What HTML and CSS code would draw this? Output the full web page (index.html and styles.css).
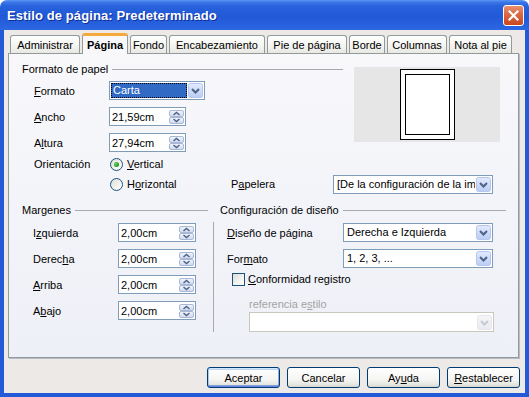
FILE: index.html
```html
<!DOCTYPE html>
<html lang="es">
<head>
<meta charset="utf-8">
<title>Estilo de página: Predeterminado</title>
<link rel="stylesheet" href="styles.css">
</head>
<body>
<svg class="defs" width="0" height="0" aria-hidden="true">
  <defs>
    <linearGradient id="gdd" x1="0" y1="0" x2="0" y2="1">
      <stop offset="0" stop-color="#e3ebfd"/>
      <stop offset="1" stop-color="#b9ccf5"/>
    </linearGradient>
    <linearGradient id="gsp" x1="0" y1="0" x2="0" y2="1">
      <stop offset="0" stop-color="#f2f5fc"/>
      <stop offset="1" stop-color="#cdd8ee"/>
    </linearGradient>
    <linearGradient id="gdis" x1="0" y1="0" x2="0" y2="1">
      <stop offset="0" stop-color="#f6f6f6"/>
      <stop offset="1" stop-color="#e8eaf0"/>
    </linearGradient>
  </defs>
</svg>
<div class="window">
  <div class="titlebar">
    <span class="title">Estilo de página: Predeterminado</span>
    <span class="close"><svg width="11" height="11" viewBox="0 0 11 11"><path d="M1.5 1.5 L9.5 9.5 M9.5 1.5 L1.5 9.5" stroke="#fff" stroke-width="2.2" stroke-linecap="square"/></svg></span>
  </div>
  <div class="frame">
    <div class="tabs">
      <div class="tab t-admin">Administrar</div>
      <div class="tab active t-pag">Página</div>
      <div class="tab t-fondo">Fondo</div>
      <div class="tab t-enc">Encabezamiento</div>
      <div class="tab t-pie">Pie de página</div>
      <div class="tab t-borde">Borde</div>
      <div class="tab t-col">Columnas</div>
      <div class="tab t-nota">Nota al pie</div>
    </div>
    <div class="panel">
      <div class="top">
        <div class="top-left">
          <div class="group-head"><span>Formato de papel</span></div>
          <div class="row first">
            <span class="lbl l75"><u>F</u>ormato</span>
            <div class="combo focus c96">
              <span class="val">Carta</span>
              <svg class="dd" width="15" height="15" viewBox="0 0 15 15"><rect x="0.5" y="0.5" width="14" height="14" rx="2" fill="url(#gdd)" stroke="#b4c6ee"/><path d="M4 6 L7.5 9.5 L11 6" fill="none" stroke="#4d6185" stroke-width="2"/></svg>
            </div>
          </div>
          <div class="row">
            <span class="lbl l75"><u>A</u>ncho</span>
            <div class="spin-field s77">
              <span class="val">21,59cm</span>
              <svg class="spin" width="15" height="14" viewBox="0 0 15 14"><rect x="0.5" y="0.5" width="14" height="6" rx="1.5" fill="url(#gsp)" stroke="#a9b8d5"/><rect x="0.5" y="7.5" width="14" height="6" rx="1.5" fill="url(#gsp)" stroke="#a9b8d5"/><path d="M4.5 5 L7.5 2.5 L10.5 5" fill="none" stroke="#4d6185" stroke-width="1.4"/><path d="M4.5 9 L7.5 11.5 L10.5 9" fill="none" stroke="#4d6185" stroke-width="1.4"/></svg>
            </div>
          </div>
          <div class="row">
            <span class="lbl l75">A<u>l</u>tura</span>
            <div class="spin-field s77">
              <span class="val">27,94cm</span>
              <svg class="spin" width="15" height="14" viewBox="0 0 15 14"><rect x="0.5" y="0.5" width="14" height="6" rx="1.5" fill="url(#gsp)" stroke="#a9b8d5"/><rect x="0.5" y="7.5" width="14" height="6" rx="1.5" fill="url(#gsp)" stroke="#a9b8d5"/><path d="M4.5 5 L7.5 2.5 L10.5 5" fill="none" stroke="#4d6185" stroke-width="1.4"/><path d="M4.5 9 L7.5 11.5 L10.5 9" fill="none" stroke="#4d6185" stroke-width="1.4"/></svg>
            </div>
          </div>
        </div>
        <div class="preview">
          <div class="page"><div class="page-inner"></div></div>
        </div>
      </div>

      <div class="orient first">
        <span class="lbl l75">Orientación</span>
        <span class="radio on"></span>
        <span class="opt-text"><u>V</u>ertical</span>
      </div>
      <div class="orient">
        <span class="lbl l75"></span>
        <div class="opt">
          <span class="radio"></span>
          <span class="opt-text">H<u>o</u>rizontal</span>
        </div>
        <span class="lbl l102">P<u>a</u>pelera</span>
        <div class="combo c160">
          <span class="val clip">[De la configuración de la impresora]</span>
          <svg class="dd" width="15" height="15" viewBox="0 0 15 15"><rect x="0.5" y="0.5" width="14" height="14" rx="2" fill="url(#gdd)" stroke="#b4c6ee"/><path d="M4 6 L7.5 9.5 L11 6" fill="none" stroke="#4d6185" stroke-width="2"/></svg>
        </div>
      </div>

      <div class="bottom">
        <div class="col-left">
          <div class="group-head"><span>Margenes</span></div>
          <div class="mrow first">
            <span class="lbl l85">I<u>z</u>quierda</span>
            <div class="spin-field s78">
              <span class="val">2,00cm</span>
              <svg class="spin" width="15" height="14" viewBox="0 0 15 14"><rect x="0.5" y="0.5" width="14" height="6" rx="1.5" fill="url(#gsp)" stroke="#a9b8d5"/><rect x="0.5" y="7.5" width="14" height="6" rx="1.5" fill="url(#gsp)" stroke="#a9b8d5"/><path d="M4.5 5 L7.5 2.5 L10.5 5" fill="none" stroke="#4d6185" stroke-width="1.4"/><path d="M4.5 9 L7.5 11.5 L10.5 9" fill="none" stroke="#4d6185" stroke-width="1.4"/></svg>
            </div>
          </div>
          <div class="mrow">
            <span class="lbl l85">Derec<u>h</u>a</span>
            <div class="spin-field s78">
              <span class="val">2,00cm</span>
              <svg class="spin" width="15" height="14" viewBox="0 0 15 14"><rect x="0.5" y="0.5" width="14" height="6" rx="1.5" fill="url(#gsp)" stroke="#a9b8d5"/><rect x="0.5" y="7.5" width="14" height="6" rx="1.5" fill="url(#gsp)" stroke="#a9b8d5"/><path d="M4.5 5 L7.5 2.5 L10.5 5" fill="none" stroke="#4d6185" stroke-width="1.4"/><path d="M4.5 9 L7.5 11.5 L10.5 9" fill="none" stroke="#4d6185" stroke-width="1.4"/></svg>
            </div>
          </div>
          <div class="mrow">
            <span class="lbl l85"><u>A</u>rriba</span>
            <div class="spin-field s78">
              <span class="val">2,00cm</span>
              <svg class="spin" width="15" height="14" viewBox="0 0 15 14"><rect x="0.5" y="0.5" width="14" height="6" rx="1.5" fill="url(#gsp)" stroke="#a9b8d5"/><rect x="0.5" y="7.5" width="14" height="6" rx="1.5" fill="url(#gsp)" stroke="#a9b8d5"/><path d="M4.5 5 L7.5 2.5 L10.5 5" fill="none" stroke="#4d6185" stroke-width="1.4"/><path d="M4.5 9 L7.5 11.5 L10.5 9" fill="none" stroke="#4d6185" stroke-width="1.4"/></svg>
            </div>
          </div>
          <div class="mrow">
            <span class="lbl l85">A<u>b</u>ajo</span>
            <div class="spin-field s78">
              <span class="val">2,00cm</span>
              <svg class="spin" width="15" height="14" viewBox="0 0 15 14"><rect x="0.5" y="0.5" width="14" height="6" rx="1.5" fill="url(#gsp)" stroke="#a9b8d5"/><rect x="0.5" y="7.5" width="14" height="6" rx="1.5" fill="url(#gsp)" stroke="#a9b8d5"/><path d="M4.5 5 L7.5 2.5 L10.5 5" fill="none" stroke="#4d6185" stroke-width="1.4"/><path d="M4.5 9 L7.5 11.5 L10.5 9" fill="none" stroke="#4d6185" stroke-width="1.4"/></svg>
            </div>
          </div>
        </div>
        <div class="vsep"></div>
        <div class="col-right">
          <div class="group-head"><span>Configuración de diseño</span></div>
          <div class="crow first">
            <span class="lbl l116"><u>D</u>iseño de página</span>
            <div class="combo c150">
              <span class="val">Derecha e Izquierda</span>
              <svg class="dd" width="15" height="15" viewBox="0 0 15 15"><rect x="0.5" y="0.5" width="14" height="14" rx="2" fill="url(#gdd)" stroke="#b4c6ee"/><path d="M4 6 L7.5 9.5 L11 6" fill="none" stroke="#4d6185" stroke-width="2"/></svg>
            </div>
          </div>
          <div class="crow">
            <span class="lbl l116">For<u>m</u>ato</span>
            <div class="combo c150">
              <span class="val">1, 2, 3, ...</span>
              <svg class="dd" width="15" height="15" viewBox="0 0 15 15"><rect x="0.5" y="0.5" width="14" height="14" rx="2" fill="url(#gdd)" stroke="#b4c6ee"/><path d="M4 6 L7.5 9.5 L11 6" fill="none" stroke="#4d6185" stroke-width="2"/></svg>
            </div>
          </div>
          <div class="check-row">
            <span class="check"></span>
            <span class="opt-text"><u>C</u>onformidad registro</span>
          </div>
          <div class="ref-label">referencia e<u>s</u>tilo</div>
          <div class="combo disabled c245">
            <span class="val"></span>
            <svg class="dd" width="15" height="15" viewBox="0 0 15 15"><rect x="0.5" y="0.5" width="14" height="14" rx="2" fill="url(#gdis)" stroke="#e4e6ec"/><path d="M4 6 L7.5 9.5 L11 6" fill="none" stroke="#c6cad4" stroke-width="2"/></svg>
          </div>
        </div>
      </div>
    </div>
    <div class="buttons">
      <button class="btn default">Aceptar</button>
      <button class="btn">Cancelar</button>
      <button class="btn">Ay<u>u</u>da</button>
      <button class="btn"><u>R</u>establecer</button>
    </div>
  </div>
</div>
</body>
</html>
```

FILE: styles.css
```css
* { box-sizing: border-box; margin: 0; padding: 0; }
html, body { width: 529px; height: 397px; overflow: hidden; }
body {
  font-family: "Liberation Sans", Arial, sans-serif;
  font-size: 11px;
  color: #000;
  background: #ffffff;
}
.defs { position: absolute; width: 0; height: 0; }

.window {
  width: 529px;
  height: 397px;
  display: flex;
  flex-direction: column;
}

/* ---------- title bar ---------- */
.titlebar {
  height: 30px;
  flex: none;
  display: flex;
  align-items: center;
  justify-content: space-between;
  padding: 0 5px 0 7px;
  border-radius: 7px 7px 0 0;
  background: linear-gradient(to bottom,
    #5a95f4 0%, #3a76e8 8%, #2862dc 20%, #2159d6 55%, #2862df 85%, #2d68e4 100%);
}
.title {
  font-weight: bold;
  font-size: 13px;
  color: #fff;
  text-shadow: 1px 1px 0 #0f2f9a;
  letter-spacing: 0.1px;
}
.close {
  width: 21px;
  height: 21px;
  margin-top: 1px;
  border: 1px solid #fff;
  border-radius: 3px;
  background: linear-gradient(to bottom, #e98f6f 0%, #dc6642 45%, #c9471f 100%);
  display: flex;
  align-items: center;
  justify-content: center;
}

/* ---------- frame ---------- */
.frame {
  flex: 1;
  display: flex;
  flex-direction: column;
  background: #ece9e6;
  border: 4px solid #2459d8;
  border-top: 0;
}

/* ---------- tabs ---------- */
.tabs {
  height: 23px;
  flex: none;
  display: flex;
  align-items: flex-end;
  gap: 2px;
  padding-left: 6px;
  position: relative;
  z-index: 2;
}
.tab {
  height: 18px;
  flex: none;
  display: flex;
  align-items: center;
  justify-content: center;
  border: 1px solid #919b9c;
  border-bottom: 0;
  border-radius: 3px 3px 0 0;
  background: linear-gradient(to bottom, #ffffff 0%, #f6f6f3 50%, #e9e8e3 100%);
  white-space: nowrap;
}
.tab.active {
  height: 21px;
  margin-bottom: -1px;
  font-weight: bold;
  border-top: 3px solid #f4a93a;
  background: #f8f8fb;
}
.t-admin { width: 70px; }
.t-pag { width: 46px; }
.t-fondo { width: 37px; }
.t-enc { width: 96px; }
.t-pie { width: 80px; }
.t-borde { width: 36px; }
.t-col { width: 60px; }
.t-nota { width: 63px; }

/* ---------- panel ---------- */
.panel {
  flex: none;
  margin-left: 4px;
  width: 511px;
  height: 305px;
  border: 1px solid #919b9c;
  background: linear-gradient(to bottom, #f8f8fb 0%, #eef0f7 100%);
  box-shadow: 1px 1px 0 #b9bcc6;
}

.top { display: flex; padding-left: 13px; }
.top-left { width: 321px; }

.group-head {
  display: flex;
  align-items: center;
  height: 14px;
  white-space: nowrap;
}
.top-left .group-head { margin-top: 8px; }
.group-head::after {
  content: "";
  flex: 1;
  border-top: 1px solid #a9a9ad;
  margin-left: 4px;
}

.lbl { white-space: nowrap; flex: none; }
.l75 { width: 75px; }
.l85 { width: 85px; }
.l102 { width: 102px; }
.l116 { width: 116px; }

.row {
  display: flex;
  align-items: center;
  height: 19px;
  padding-left: 12px;
  margin-top: 7px;
}
.row.first { margin-top: 5px; }

/* combo box */
.combo {
  display: flex;
  align-items: center;
  height: 19px;
  padding: 1px;
  border: 1px solid #7f9db9;
  background: #fff;
  flex: none;
}
.combo .val {
  flex: 1;
  height: 15px;
  line-height: 15px;
  padding-left: 2px;
  white-space: nowrap;
  overflow: hidden;
}
.combo .dd { flex: none; margin-left: 1px; }
.combo.focus .val {
  background: #316ac5;
  color: #fff;
  outline: 1px dotted #000;
  outline-offset: -1px;
}
.combo.disabled { border-color: #c9c7ba; height: 20px; }
.c96 { width: 96px; }
.c150 { width: 150px; }
.c160 { width: 160px; }
.c245 { width: 245px; margin-left: 29px; margin-top: 1px; }

/* spin field */
.spin-field {
  display: flex;
  align-items: center;
  height: 19px;
  padding-right: 1px;
  border: 1px solid #7f9db9;
  background: #fff;
  flex: none;
}
.spin-field .val { flex: 1; padding-left: 2px; white-space: nowrap; }
.spin-field .spin { flex: none; }
.s77 { width: 77px; }
.s78 { width: 78px; }

/* preview */
.preview {
  margin-left: 11px;
  margin-top: 13px;
  width: 146px;
  height: 75px;
  background: #e6e6e6;
  display: flex;
  justify-content: center;
  align-items: center;
}
.page {
  width: 55px;
  height: 71px;
  border: 1px solid #000;
  background: #fff;
  padding: 4px;
}
.page-inner {
  width: 100%;
  height: 100%;
  border: 1px solid #000;
}

/* orientation */
.orient {
  display: flex;
  align-items: center;
  height: 20px;
  padding-left: 25px;
}
.orient.first { margin-top: 2px; }
.opt { width: 122px; display: flex; align-items: center; flex: none; }
.opt-text { margin-left: 4px; white-space: nowrap; }

.radio {
  width: 13px;
  height: 13px;
  margin-left: 1px;
  flex: none;
  border-radius: 50%;
  border: 1px solid #1c5180;
  background: linear-gradient(135deg, #dcdcd5 0%, #f4f4f0 60%, #ffffff 100%);
  display: flex;
  align-items: center;
  justify-content: center;
}
.radio.on::after {
  content: "";
  width: 5px;
  height: 5px;
  border-radius: 50%;
  background: radial-gradient(circle at 35% 35%, #6ed66e 0%, #21a121 60%, #1a8a1a 100%);
}

/* bottom section */
.bottom {
  display: flex;
  padding-left: 13px;
  margin-top: 9px;
}
.col-left { width: 186px; }
.vsep {
  width: 1px;
  height: 110px;
  margin-left: 5px;
  margin-top: 19px;
  background: #a9a9ad;
  flex: none;
}
.col-right { width: 286px; margin-left: 6px; }

.mrow, .crow {
  display: flex;
  align-items: center;
  height: 19px;
  margin-top: 7px;
}
.mrow { padding-left: 11px; }
.crow { padding-left: 7px; }
.mrow.first, .crow.first { margin-top: 6px; }

.check-row {
  display: flex;
  align-items: center;
  height: 20px;
  margin-top: 1px;
  padding-left: 12px;
}
.check {
  width: 13px;
  height: 13px;
  flex: none;
  border: 1px solid #1c5180;
  background: linear-gradient(135deg, #dcdcd5 0%, #f4f4f0 60%, #ffffff 100%);
}
.check-row .opt-text { margin-left: 3px; }

.ref-label {
  height: 14px;
  line-height: 14px;
  margin-top: 8px;
  padding-left: 29px;
  color: #a3a3a3;
}

/* buttons */
.buttons {
  display: flex;
  justify-content: flex-end;
  gap: 7px;
  padding-right: 5px;
  margin-top: 9px;
}
.btn {
  width: 73px;
  height: 21px;
  border: 1px solid #003c74;
  border-radius: 3px;
  background: linear-gradient(to bottom, #ffffff 0%, #f5f5f3 60%, #e3e3de 90%, #d6d3cc 100%);
  font-family: "Liberation Sans", Arial, sans-serif;
  font-size: 11px;
  color: #000;
}
.btn.default {
  box-shadow: inset 0 1px 0 #cee7ff, inset 0 -1px 0 #6982ee, inset 1px 0 0 #a9c8f5, inset -1px 0 0 #89ade4,
              inset 0 2px 0 #bcd4f6, inset 0 -2px 0 #7da2ce;
}
```
